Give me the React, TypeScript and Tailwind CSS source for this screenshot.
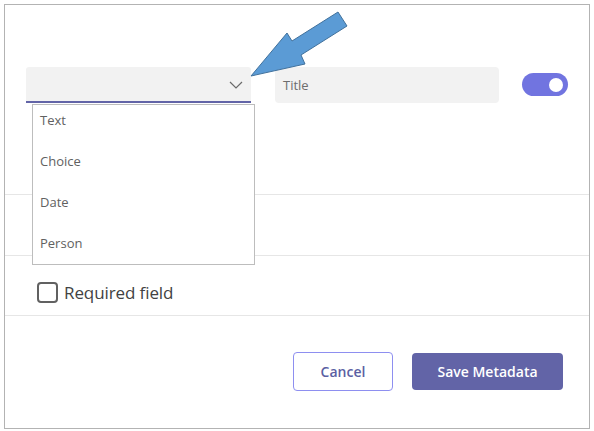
import { useState } from "react";

const fieldTypes = ["Text", "Choice", "Date", "Person"];

function Chevron() {
  return (
    <svg width="14" height="8" viewBox="0 0 14 8" fill="none">
      <path d="M1 1l6 6 6-6" stroke="#6b6b6b" strokeWidth="1.2" />
    </svg>
  );
}

// callout arrow pointing at the type picker
function Callout() {
  return (
    <svg
      className="absolute left-0 top-0 pointer-events-none"
      width="594"
      height="431"
      viewBox="0 0 594 431"
    >
      <polygon
        points="251,76 287,33 292,41 338,12 347,26 301,55 305,64"
        fill="#5b9bd5"
        stroke="#41719c"
        strokeWidth="1"
        strokeLinejoin="miter"
      />
    </svg>
  );
}

export default function App() {
  const [enabled, setEnabled] = useState(true);
  const [required, setRequired] = useState(false);

  return (
    <div
      className="relative w-[594px] h-[431px] bg-white p-1"
      style={{ fontFamily: '"Open Sans", "Noto Sans", sans-serif' }}
    >
      <div className="relative h-[425px] w-[586px] border border-[#b3b3b3] flex flex-col">
        {/* field definition row */}
        <div className="h-[189px] pt-[62px] pl-[21px] pr-[21px] flex items-start">
          <div className="relative w-[225px] h-[36px] bg-[#f2f2f2] border-b-2 border-[#6264a7] rounded-t-[3px] flex items-center justify-end pr-[8px] pt-[1px]">
            <Chevron />
            <ul className="absolute left-[6px] top-[37px] w-[223px] h-[161px] bg-white border border-[#bdbdbd] z-10 pt-[5px]">
              {fieldTypes.map((t) => (
                <li
                  key={t}
                  className="h-[41px] pl-[7px] text-[13px] leading-[20px] text-[#616161]"
                >
                  {t}
                </li>
              ))}
            </ul>
          </div>
          <div className="ml-[24px] w-[224px] h-[36px] bg-[#f2f2f2] rounded-[4px] flex items-center pl-[8px] pt-[1px] text-[13px] text-[#6e6e6e]">
            Title
          </div>
          <button
            onClick={() => setEnabled(!enabled)}
            className="ml-auto mt-[6px] w-[46px] h-[23px] rounded-full bg-[#7174e0] flex items-center justify-end pr-[5px]"
          >
            <span className="w-[14px] h-[14px] rounded-full bg-white" />
          </button>
        </div>

        <div className="border-t border-[#e6e6e6] h-[61px]" />

        <div className="border-t border-[#e6e6e6] h-[60px] flex items-start pt-[26px] pl-[32px]">
          <label className="flex items-center gap-[6px] cursor-pointer">
            <span
              onClick={() => setRequired(!required)}
              className="w-[21px] h-[21px] rounded-[4px] border-2 border-[#616161] bg-white"
            />
            <span className="text-[17px] leading-[21px] text-[#424242] tracking-[-0.1px]">
              Required field
            </span>
          </label>
        </div>

        <div className="border-t border-[#e6e6e6] flex-1 flex justify-end items-start pt-[36px] pr-[26px] gap-[19px]">
          <button className="w-[100px] h-[39px] rounded-[4px] border border-[#8e8ff0] bg-white text-[14px] font-semibold text-[#5b5fa3]">
            Cancel
          </button>
          <button className="w-[151px] h-[37px] mt-[1px] rounded-[4px] bg-[#6264a7] text-[14px] font-semibold text-white">
            Save Metadata
          </button>
        </div>
      </div>
      <Callout />
    </div>
  );
}
